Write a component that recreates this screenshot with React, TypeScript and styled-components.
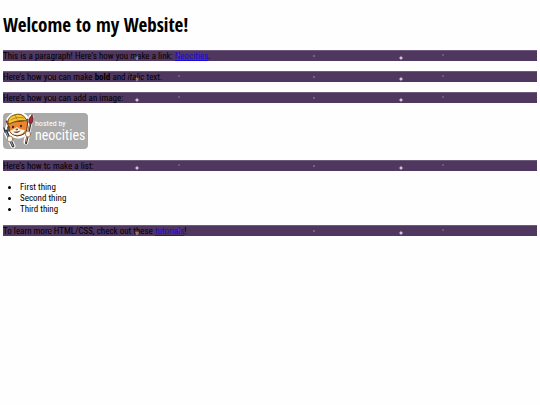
import React from 'react';
import styled, { createGlobalStyle } from 'styled-components';

const GlobalStyle = createGlobalStyle`
  body {
    margin: 0;
    background: #fefefe;
    color: #000;
    font-family: 'Roboto Condensed', 'DejaVu Sans Condensed', sans-serif;
    font-size: 9px;
    line-height: 11px;
  }
`;

const Page = styled.main`
  display: flex;
  flex-direction: column;
  gap: 10px;
  padding: 14px 3px;
`;

const Title = styled.h1`
  margin: 0 0 3px;
  font-family: 'Open Sans Condensed', 'Roboto Condensed', sans-serif;
  font-size: 19px;
  line-height: 23px;
  font-weight: 700;
`;

/* Night sky strip: a 264px tile with three stars. */
const StarryParagraph = styled.p`
  margin: 0;
  padding-top: 1px;
  line-height: 10px;
  background:
    radial-gradient(circle at 47px 6px, #d9cce3 0, transparent 1px) 0 0 / 264px 11px repeat-x,
    radial-gradient(ellipse 1px 3px at 134px 8px, #fff, transparent) 0 0 / 264px 11px repeat-x,
    radial-gradient(ellipse 3px 1px at 134px 8px, #fff, transparent) 0 0 / 264px 11px repeat-x,
    radial-gradient(circle at 176px 5px, #b8a5c8 0, transparent 1px) 0 0 / 264px 11px repeat-x,
    #4f3760;
  box-shadow: inset 0 1px #6f5b7d;
`;

const Link = styled.a`
  color: #1c08dc;
  text-decoration: underline;
`;

const Badge = styled.svg`
  display: block;
  width: 85px;
  height: 37px;
`;

const BadgeText = styled.text<{ $size: number }>`
  fill: #fff;
  font-family: 'Roboto Condensed', sans-serif;
  font-size: ${(p) => p.$size}px;
`;

const List = styled.ul`
  margin: 0;
  padding: 1px 0 0 17px;
  line-height: 11px;
`;

function NeocitiesBadge() {
  return (
    <Badge viewBox="0 0 85 37" role="img" aria-label="Hosted by Neocities">
      <rect x="0" y="0" width="85" height="36" rx="4" fill="#a9a9a9" />
      <BadgeText x="32" y="13" $size={8}>hosted by</BadgeText>
      <BadgeText x="32" y="27" $size={14}>neocities</BadgeText>
      <g strokeLinecap="round" strokeLinejoin="round">
        <path d="M2 17 L10 33 M28 4 L23 29" stroke="#fff" strokeWidth="5" />
        <path d="M5 11 L5 6 Q9 0 15 1 Q21 0 24 5 L25 13 Q24 24 14 24 Q4 22 4 14Z" fill="#fff" stroke="#fff" strokeWidth="3" />
        <path d="M3 18 L10 33" stroke="#29303a" strokeWidth="2.8" />
        <path d="M1 15 L2 19 L5 18 L5 14" fill="none" stroke="#39434e" strokeWidth="1.6" />
        <path d="M3 19 L10 33" stroke="#a4afb8" strokeWidth="1" />
        <path d="M28 8 L23 30" stroke="#3b2b2b" strokeWidth="2.2" />
        <path d="M27 10 L23 29" stroke="#c59872" strokeWidth="1" />
        <path d="M29 2 Q25 5 26 10 L29 10 Q31 5 29 2Z" fill="#a62b35" stroke="#54242a" strokeWidth="0.8" />
        <path d="M6 14 L3 8 L9 9 L20 8 L25 6 L24 15 Q24 22 14 23 Q5 21 6 14Z" fill="#ed842f" stroke="#56341e" strokeWidth="1" />
        <path d="M7 18 Q11 16 14 14 Q17 17 22 17 Q20 22 14 22 Q9 22 7 18Z" fill="#fff4df" />
        <path d="M5 9 Q5 4 11 2 Q19 -1 23 6 L24 8 Q16 6 6 11Z" fill="#f6c631" stroke="#735414" strokeWidth="1" />
        <path d="M8 7 Q14 3 21 5 M12 2 L14 6" fill="none" stroke="#a8791a" strokeWidth="0.8" />
        <ellipse cx="10" cy="14" rx="1" ry="1.3" fill="#302421" />
        <ellipse cx="18" cy="13" rx="1" ry="1.3" fill="#302421" />
        <path d="M13 16 L15 16 L14 17Z M11 19 Q14 21 17 18" fill="#59332a" stroke="#59332a" strokeWidth="0.6" />
        <ellipse cx="7" cy="26" rx="2.8" ry="3" fill="#fff8e8" stroke="#8b6950" strokeWidth="0.8" />
        <ellipse cx="25" cy="21" rx="2.6" ry="3" fill="#fff8e8" stroke="#8b6950" strokeWidth="0.8" />
      </g>
    </Badge>
  );
}

export default function App() {
  return (
    <>
      <GlobalStyle />
      <Page>
        <Title>Welcome to my Website!</Title>
        <StarryParagraph>
          This is a paragraph! Here's how you make a link: <Link href="#neocities">Neocities</Link>.
        </StarryParagraph>
        <StarryParagraph>
          Here's how you can make <strong>bold</strong> and <em>italic</em> text.
        </StarryParagraph>
        <StarryParagraph>Here's how you can add an image:</StarryParagraph>
        <NeocitiesBadge />
        <StarryParagraph>Here's how to make a list:</StarryParagraph>
        <List>
          <li>First thing</li>
          <li>Second thing</li>
          <li>Third thing</li>
        </List>
        <StarryParagraph>
          To learn more HTML/CSS, check out these <Link href="#tutorials">tutorials</Link>!
        </StarryParagraph>
      </Page>
    </>
  );
}
